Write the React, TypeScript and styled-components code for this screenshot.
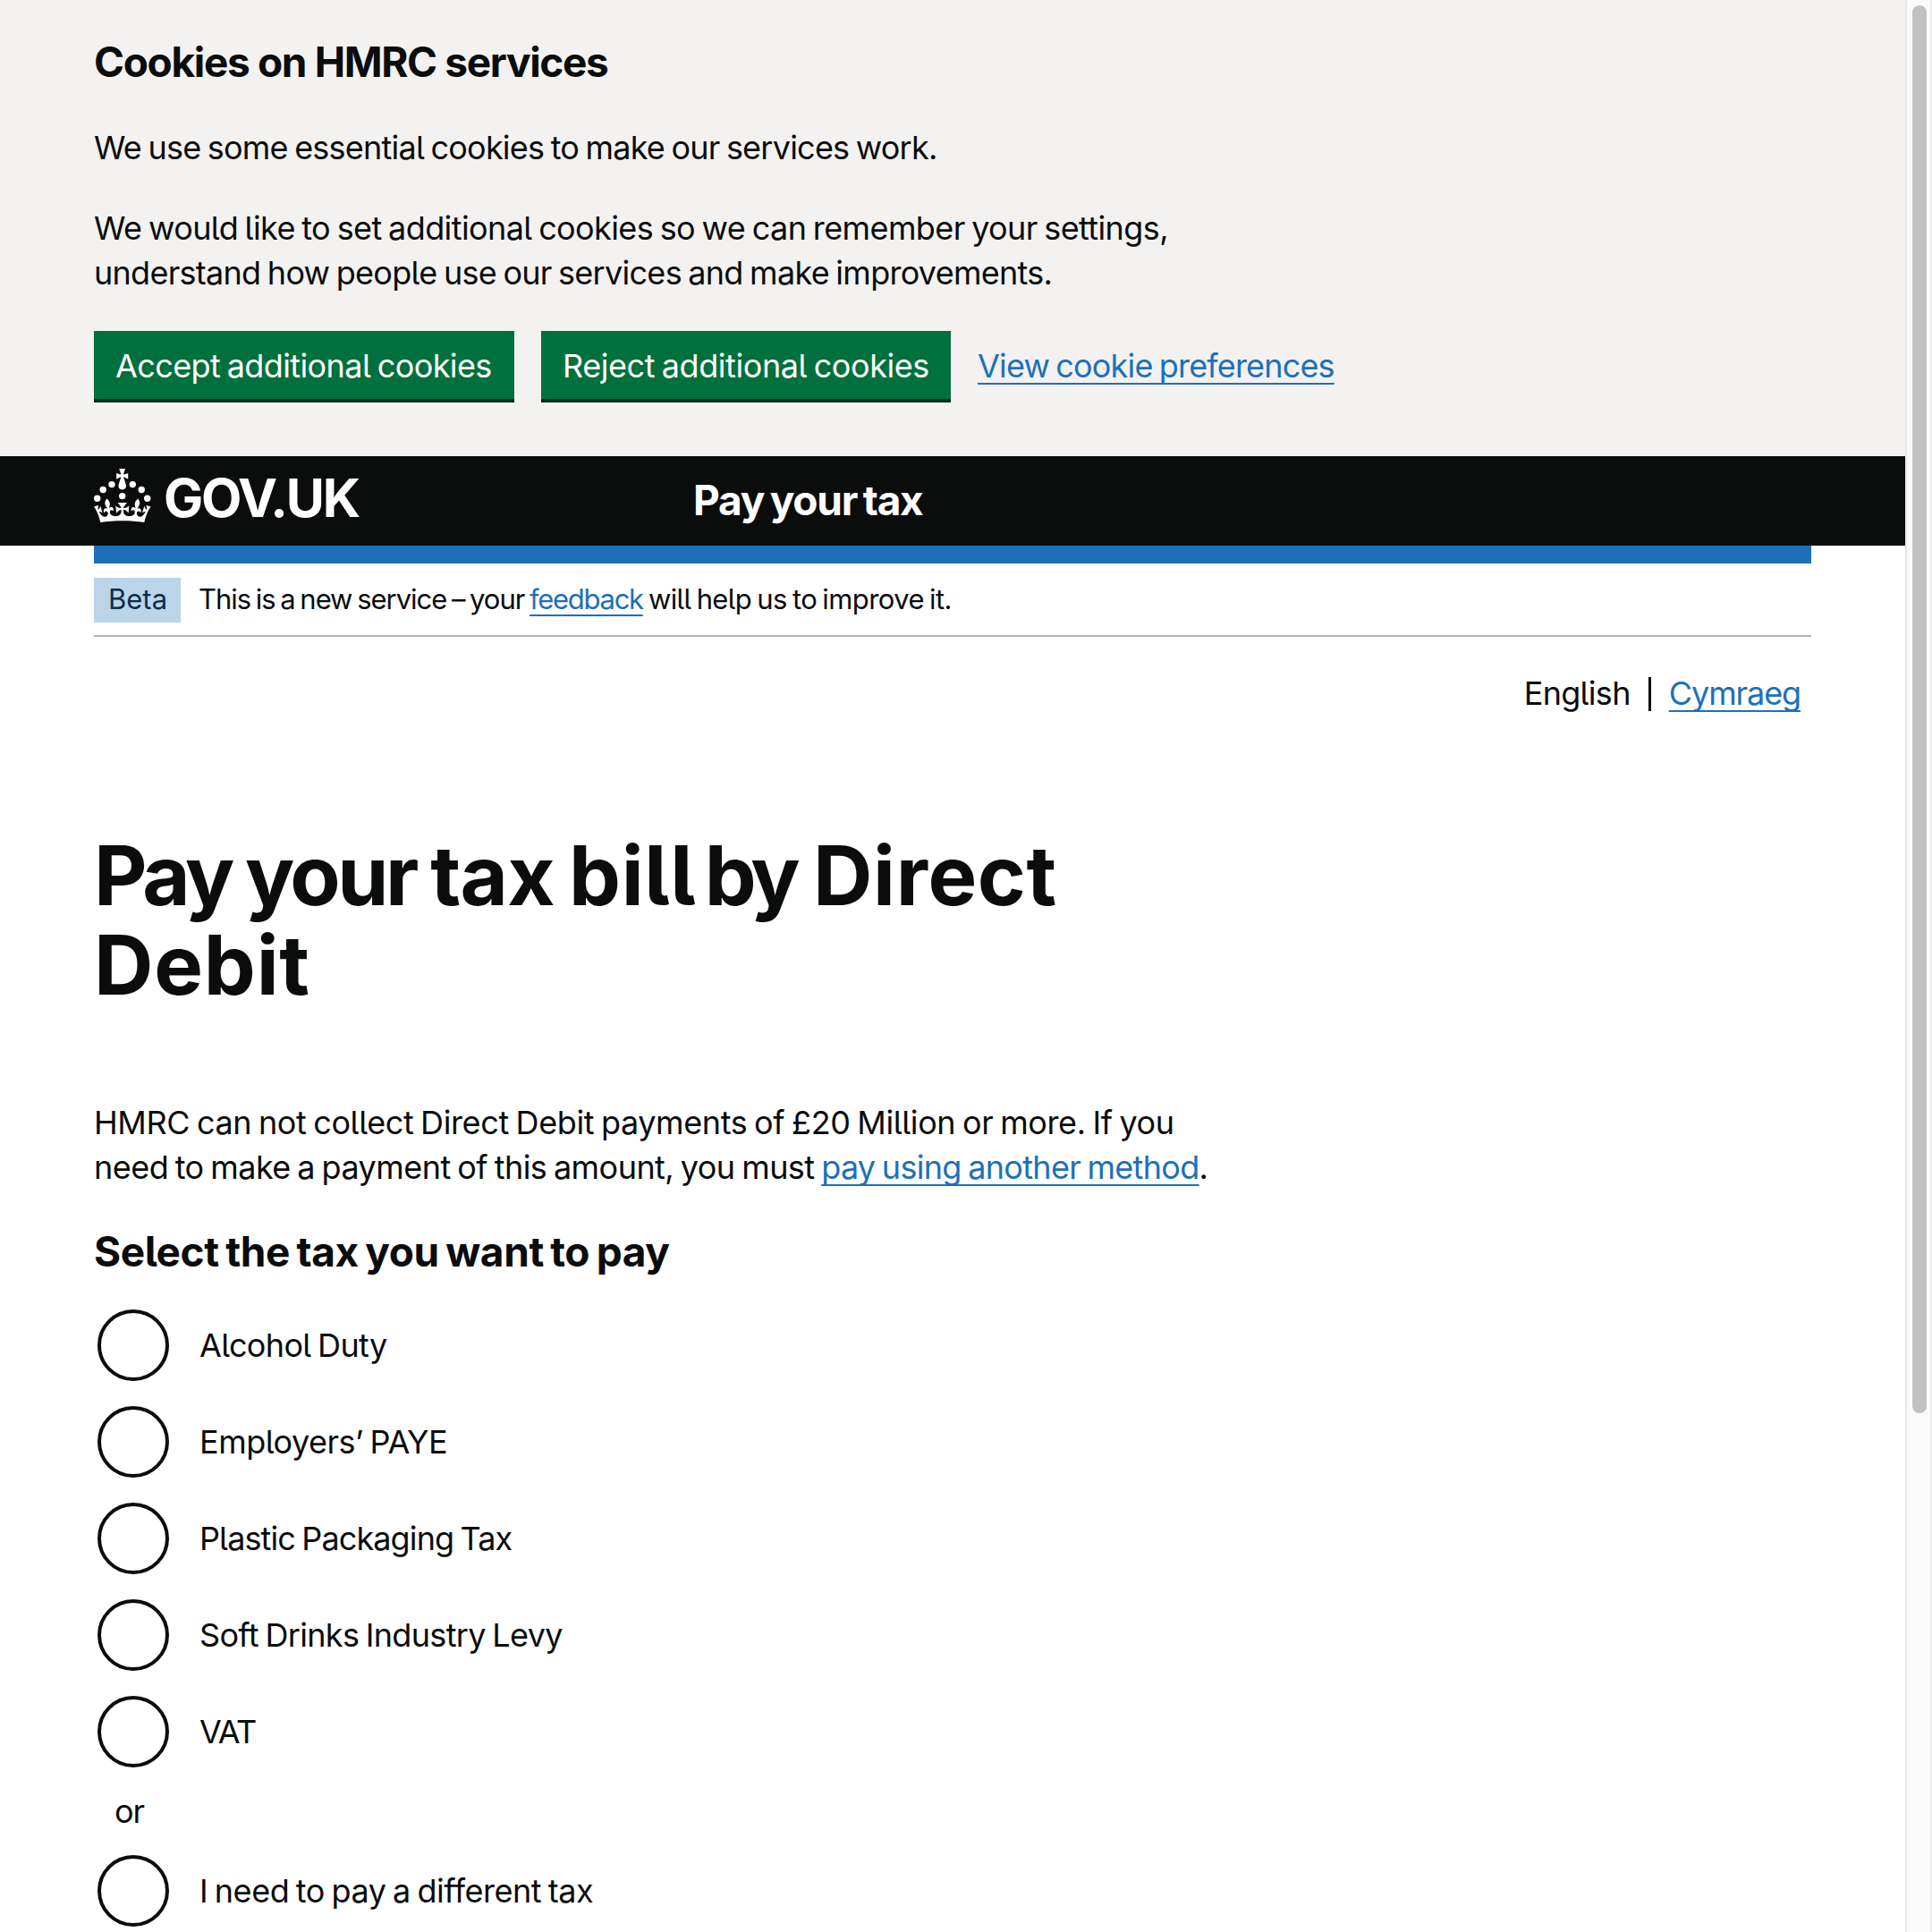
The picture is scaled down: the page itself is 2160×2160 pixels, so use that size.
import React from "react";
import styled, { createGlobalStyle } from "styled-components";

const ink = "#0b0c0c";
const blue = "#1d70b8";

const GlobalStyle = createGlobalStyle`
  *, *::before, *::after { box-sizing: border-box; }
  body {
    margin: 0;
    background: #fff;
    color: ${ink};
    font-family: Inter, "Liberation Sans", sans-serif;
    font-feature-settings: "cv05";
    font-size: 36px;
    font-weight: 390;
    line-height: 50px;
    word-spacing: -2px;
  }
`;

const Window = styled.div`
  display: flex;
  height: 2160px;
  overflow: hidden;
`;

const Page = styled.div`
  flex: 1;
  min-width: 0;
`;

const Scrollbar = styled.div`
  width: 30px;
  padding: 6px 0 0 6px;
  background: #fafafa;
  border-left: 2px solid #e8e8e8;
  border-right: 2px solid #ededed;
`;

const Thumb = styled.div`
  width: 16px;
  height: 1574px;
  border-radius: 8px;
  background: #c1c1c1;
`;

/* One unbroken run of text with its own tracking */
const Line = styled.span<{ $track?: number }>`
  display: block;
  white-space: nowrap;
  letter-spacing: ${(p) => p.$track ?? 0}px;
`;

const Link = styled.a<{ $track?: number }>`
  color: ${blue};
  letter-spacing: ${(p) => p.$track ?? 0}px;
  text-decoration: underline;
  text-decoration-thickness: 2px;
  text-decoration-skip-ink: none;
  text-underline-offset: 6px;
  white-space: nowrap;
`;

const CookieBanner = styled.section`
  height: 510px;
  padding: 39px 105px 0;
  background: #f3f2f1;
`;

const Heading = styled.h2<{ $track: number; $gap?: number }>`
  margin: 0;
  font-size: 46px;
  font-weight: 700;
  line-height: 60px;
  letter-spacing: ${(p) => p.$track}px;
  word-spacing: ${(p) => p.$gap ?? -3}px;
`;

const Paragraph = styled.p<{ $top?: number }>`
  margin: ${(p) => p.$top ?? 40}px 0 0;
`;

const ButtonGroup = styled.div`
  display: flex;
  align-items: flex-start;
  gap: 30px;
  margin-top: 40px;
`;

const Button = styled.button<{ $width: number; $track: number }>`
  width: ${(p) => p.$width}px;
  height: 76px;
  padding: 1px 0 0 24px;
  border: 0;
  background: #00703c;
  box-shadow: 0 4px 0 #002d18;
  color: #fff;
  font: inherit;
  font-feature-settings: inherit;
  letter-spacing: ${(p) => p.$track}px;
  word-spacing: inherit;
  text-align: left;
  white-space: nowrap;
`;

const ButtonLink = styled.div`
  padding-top: 14px;
`;

const Header = styled.header`
  display: flex;
  height: 100px;
  padding: 14px 105px 0;
  background: ${ink};
  color: #fff;
`;

const Logo = styled.a`
  display: flex;
  width: 670px;
  color: #fff;
`;

const Crown = styled.svg`
  display: block;
  width: 64px;
  height: 60px;
  fill: currentColor;
`;

const LogoText = styled.span`
  margin-left: 14px;
  font-size: 59px;
  font-weight: 660;
  line-height: 65px;
  letter-spacing: -2.2px;
`;

const ServiceName = styled.span`
  padding-top: 5px;
  font-size: 46px;
  font-weight: 700;
  line-height: 60px;
  letter-spacing: -1.25px;
  word-spacing: -3px;
`;

const Container = styled.div`
  margin: 0 105px;
`;

const BlueBar = styled.div`
  height: 20px;
  background: ${blue};
`;

const PhaseBanner = styled.div`
  display: flex;
  height: 82px;
  padding-top: 16px;
  border-bottom: 2px solid #b1b4b6;
  font-size: 31px;
  font-weight: 400;
`;

const Tag = styled.strong`
  width: 97px;
  height: 50px;
  padding-left: 16px;
  background: #bbd4ea;
  color: #0c2d4a;
  font-weight: 400;
  line-height: 48px;
`;

const PhaseText = styled.span`
  margin-left: 20px;
  line-height: 48px;
  white-space: nowrap;
`;

const Tracked = styled.span<{ $track: number; $gap?: number }>`
  letter-spacing: ${(p) => p.$track}px;
  word-spacing: ${(p) => (p.$gap === undefined ? "inherit" : `${p.$gap}px`)};
`;

const Languages = styled.nav`
  display: flex;
  align-items: center;
  justify-content: flex-end;
  height: 50px;
  margin: 38px 12px 0 0;
`;

const Divider = styled.span`
  width: 3px;
  height: 38px;
  margin: 2px 20px 0 20px;
  background: ${ink};
`;

const Title = styled.h1`
  margin: 129px 0 101px;
  font-size: 92px;
  font-weight: 700;
  line-height: 100px;
`;

const Body = styled.p`
  margin: 0 0 39px;
`;

const Radios = styled.div`
  display: flex;
  flex-direction: column;
  gap: 28px;
  margin-top: 35px;
  padding-left: 4px;
`;

const RadioItem = styled.label`
  display: flex;
  align-items: center;
  gap: 34px;
  height: 80px;
`;

const Circle = styled.span`
  width: 80px;
  height: 80px;
  border: 4px solid ${ink};
  border-radius: 50%;
`;

const Or = styled.div`
  margin: -4px 0;
  padding-left: 19px;
  letter-spacing: -1px;
`;

const taxes: [string, number][] = [
  ["Alcohol Duty", -0.65],
  ["Employers’ PAYE", -0.5],
  ["Plastic Packaging Tax", -0.88],
  ["Soft Drinks Industry Levy", -0.66],
  ["VAT", -1.6],
];

function Radio({ label, track }: { label: string; track: number }) {
  return (
    <RadioItem>
      <Circle />
      <Line $track={track}>{label}</Line>
    </RadioItem>
  );
}

function CrownIcon() {
  return (
    <Crown viewBox="0 0 64 60" aria-hidden="true">
      <circle cx="20" cy="17.6" r="3.7" />
      <circle cx="10.2" cy="23.5" r="3.7" />
      <circle cx="3.7" cy="33.2" r="3.7" />
      <circle cx="31.7" cy="30.6" r="3.7" />
      <circle cx="43.3" cy="17.6" r="3.7" />
      <circle cx="53.2" cy="23.5" r="3.7" />
      <circle cx="59.7" cy="33.2" r="3.7" />
      <path d="M33.1,9.8c.2-.1.3-.3.5-.5l4.6,2.4v-6.8l-4.6,1.5c-.1-.2-.3-.3-.5-.5l1.9-5.9h-6.7l1.9,5.9c-.2.1-.3.3-.5.5l-4.6-1.5v6.8l4.6-2.4c.1.2.3.3.5.5l-2.6,8c-.9,2.8,1.2,5.7,4.1,5.7h0c3,0,5.1-2.9,4.1-5.7l-2.6-8ZM37,37.9s-3.4,3.8-4.1,6.1c2.2,0,4.2-.5,6.4-2.8l-.7,8.5c-2-2.8-4.4-4.1-5.7-3.8.1,3.1.5,6.7,5.8,7.2,3.7.3,6.7-1.5,7-3.8.4-2.6-2-4.3-3.7-1.6-1.4-4.5,2.4-6.1,4.9-3.2-1.9-4.5-1.8-7.7,2.4-10.9,3,4,2.6,7.3-1.2,11.1,2.4-1.3,6.2,0,4,4.6-1.2-2.8-3.7-2.2-4.2.2-.3,1.7.7,3.7,3,4.2,1.9.3,4.7-.9,7-5.9-1.3,0-2.4.7-3.9,1.7l2.4-8c.6,2.3,1.4,3.7,2.2,4.5.6-1.6.5-2.8,0-5.3l5,1.8c-2.6,3.6-5.2,8.7-7.3,17.5-7.4-1.1-15.7-1.7-24.5-1.7h0c-8.8,0-17.1.6-24.5,1.7-2.1-8.9-4.7-13.9-7.3-17.5l5-1.8c-.5,2.5-.6,3.7,0,5.3.8-.8,1.6-2.3,2.2-4.5l2.4,8c-1.5-1-2.6-1.7-3.9-1.7,2.3,5,5.2,6.2,7,5.9,2.3-.4,3.3-2.4,3-4.2-.5-2.4-3-3.1-4.2-.2-2.2-4.6,1.6-6,4-4.6-3.7-3.7-4.2-7.1-1.2-11.1,4.2,3.2,4.3,6.4,2.4,10.9,2.5-2.8,6.3-1.3,4.9,3.2-1.8-2.7-4.1-1-3.7,1.6.3,2.3,3.3,4.1,7,3.8,5.4-.5,5.7-4.2,5.8-7.2-1.3-.2-3.7,1-5.7,3.8l-.7-8.5c2.2,2.3,4.2,2.7,6.4,2.8-.7-2.3-4.1-6.1-4.1-6.1h10.6,0Z" />
    </Crown>
  );
}

export default function App() {
  return (
    <Window>
      <GlobalStyle />
      <Page>
        <CookieBanner>
          <Heading $track={-1.34} $gap={0}>Cookies on HMRC services</Heading>
          <Paragraph $top={41}>
            <Line $track={-0.77}>We use some essential cookies to make our services work.</Line>
          </Paragraph>
          <Paragraph>
            <Line $track={-0.6}>We would like to set additional cookies so we can remember your settings,</Line>
            <Line $track={-0.72}>understand how people use our services and make improvements.</Line>
          </Paragraph>
          <ButtonGroup>
            <Button $width={470} $track={-0.6}>Accept additional cookies</Button>
            <Button $width={458} $track={-0.43}>Reject additional cookies</Button>
            <ButtonLink>
              <Link $track={-0.83}>View cookie preferences</Link>
            </ButtonLink>
          </ButtonGroup>
        </CookieBanner>
        <Header>
          <Logo>
            <CrownIcon />
            <LogoText>GOV.UK</LogoText>
          </Logo>
          <ServiceName>Pay your tax</ServiceName>
        </Header>
        <Container>
          <BlueBar />
          <PhaseBanner>
            <Tag>Beta</Tag>
            <PhaseText>
              <Tracked $track={-1.03}>This is a new service – your </Tracked>
              <Link $track={-1.3}>feedback</Link>
              <Tracked $track={-0.59}> will help us to improve it.</Tracked>
            </PhaseText>
          </PhaseBanner>
          <Languages>
            <Line $track={-0.69}>English</Line>
            <Divider />
            <Link $track={-1.1}>Cymraeg</Link>
          </Languages>
          <Title>
            <Line>
              <Tracked $track={-4.1}>Pay </Tracked>
              <Tracked $track={-3.5}>your </Tracked>
              <Tracked $track={-0.8} $gap={-4.7}>tax </Tracked>
              <Tracked $track={0.6} $gap={-13}>bill </Tracked>
              <Tracked $track={-4.7} $gap={2}>by </Tracked>
              <Tracked $track={0.6}>Direct</Tracked>
            </Line>
            <Line $track={0.8}>Debit</Line>
          </Title>
          <Body>
            <Line $track={-0.38}>HMRC can not collect Direct Debit payments of £20 Million or more. If you</Line>
            <Line>
              <Tracked $track={-0.54}>need to make a payment of this amount, you must </Tracked>
              <Link $track={-0.69}>pay using another method</Link>.
            </Line>
          </Body>
          <Heading $track={-0.4}>Select the tax you want to pay</Heading>
          <Radios>
            {taxes.map(([label, track]) => (
              <Radio key={label} label={label} track={track} />
            ))}
            <Or>or</Or>
            <Radio label="I need to pay a different tax" track={-0.48} />
          </Radios>
        </Container>
      </Page>
      <Scrollbar>
        <Thumb />
      </Scrollbar>
    </Window>
  );
}
